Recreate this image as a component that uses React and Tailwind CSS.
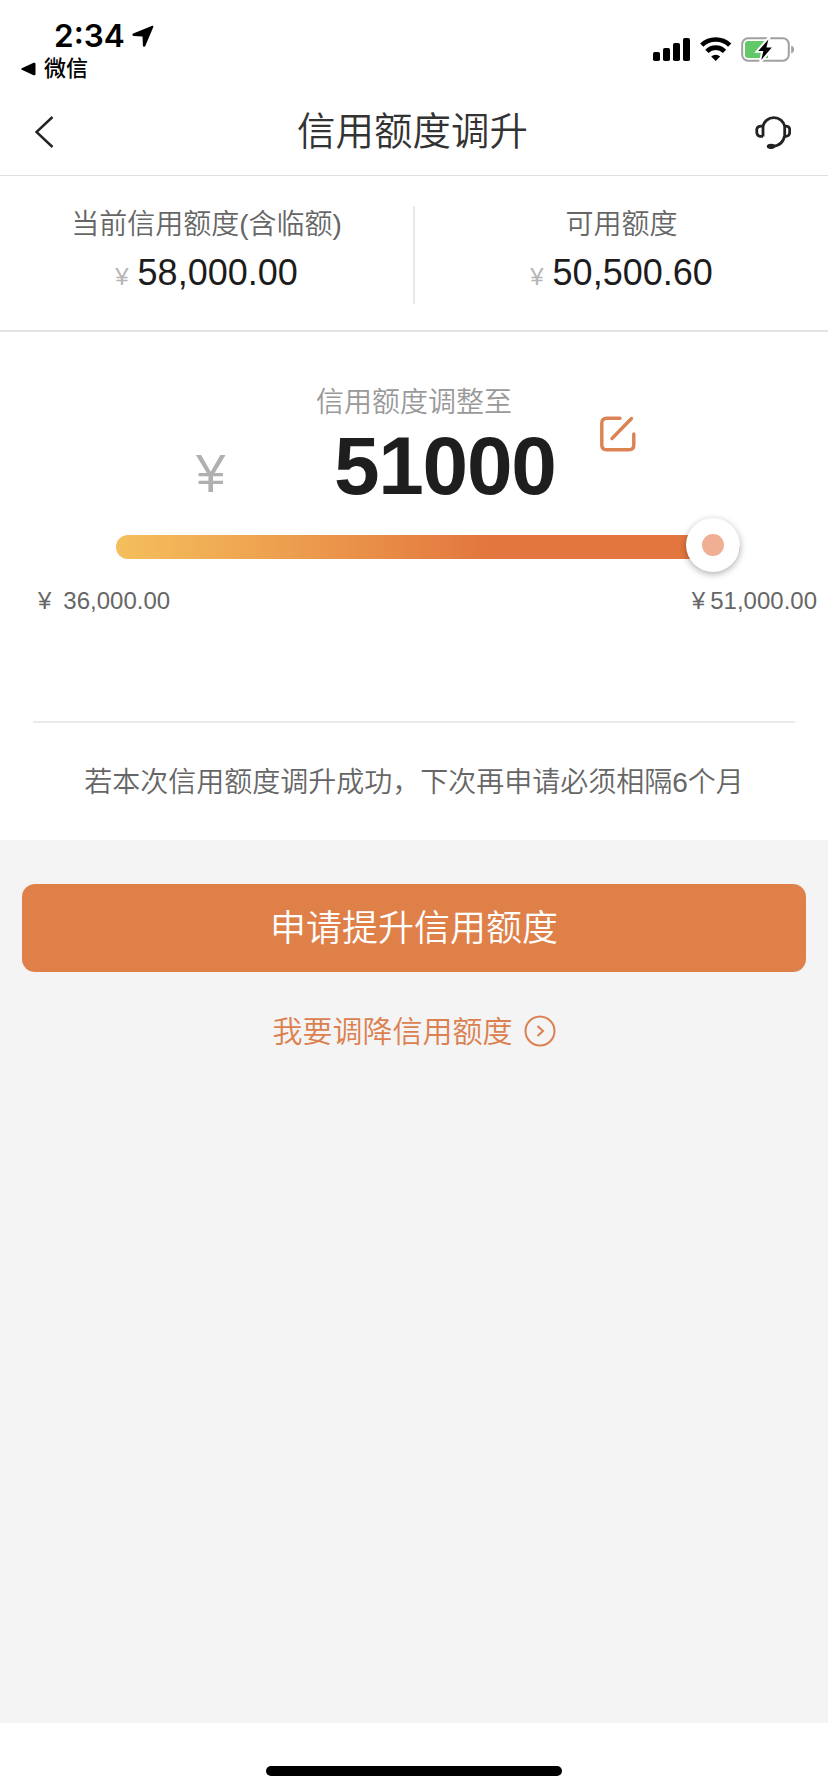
function LocationArrow() {
  return (
    <svg className="ml-[7px] h-[22px] w-[22px]" viewBox="0 0 22 22" fill="#000">
      <path d="M20.300.7 1.200 8.600c-1.300.6-.9 2.300.4 2.400l8.900.4.4 9.100c.1 1.400 1.900 1.700 2.400.500L21.300 1.900c.3-.8-.3-1.500-1-1.200Z" />
    </svg>
  );
}

function StatusBar() {
  return (
    <div className="flex h-[88px] justify-between">
      <div className="pl-[21px] pt-[20px]">
        <div className="flex h-8 items-center pl-[33px]">
          <span className="font-['Inter'] text-[31.500px] font-semibold leading-8 text-black">2:34</span>
          <LocationArrow />
        </div>
        <div className="flex h-[33px] items-center gap-[8px]">
          <svg className="h-[14px] w-[15px]" viewBox="0 0 15 14">
            <path d="M.8 6.200 12.600.8Q14.500.200 14.500 2v10q0 1.800-1.900 1.200L.8 7.800q-1.100-.8 0-1.600Z" />
          </svg>
          <span className="mt-[1px] text-[22px] font-medium leading-[34px] text-black">微信</span>
        </div>
      </div>
      <div className="flex items-start pr-[33px] pt-[37px]">
        <svg className="h-[25px] w-[142px]" viewBox="0 0 142 25">
          <rect x="0" y="15" width="7" height="9" rx="1.800" />
          <rect x="10" y="11" width="7" height="13" rx="1.800" />
          <rect x="20" y="6" width="7" height="18" rx="1.800" />
          <rect x="30" y="1" width="7" height="23" rx="1.800" />
          <g fill="none" stroke="#000" strokeWidth="4.600">
            <path d="M48.700 8.200a20 20 0 0 1 28 0" />
            <path d="M53.900 14.300a12.400 12.400 0 0 1 17.600 0" />
          </g>
          <path d="M62.700 24l-4.500-4.500a6.600 6.600 0 0 1 9 0Z" />
          <rect x="89.200" y="1.200" width="46.600" height="22.600" rx="6" fill="none" stroke="#a0a0a0" strokeWidth="2" />
          <path d="M95 4h20v17H95q-3 0-3-3V7q0-3 3-3Z" fill="#62c766" />
          <path d="M138.200 8.500c3.800 1.300 3.800 6.700 0 8Z" fill="#a0a0a0" />
          <path d="M115 2.800 105.600 13.800h4.600L108.600 22.500l9.800-11.500h-4.600Z" fill="#000" stroke="#fff" strokeWidth="4" />
          <path d="M115.400 2.500 105.200 14h5.200l-2.200 9 10.600-12.400h-5.400Z" fill="#000" />
        </svg>
      </div>
    </div>
  );
}

function Header() {
  return (
    <header className="flex h-[88px] items-center justify-between border-b border-[#e0e0e0] pl-[34px] pr-[37px]">
      <svg className="h-8 w-[37px]" viewBox="0 0 37 32" fill="none" stroke="#222" strokeWidth="2.400">
        <path d="M18.500 1 2.500 16l16 15" />
      </svg>
      <h1 className="text-[38.500px] font-[350] leading-[56px] text-[#333]">信用额度调升</h1>
      <svg className="h-[36px] w-[37px]" viewBox="0 0 37 36" fill="none" stroke="#222" strokeWidth="2.800">
        <path d="M9 22.500V12.500A11 10.700 0 0 1 30.700 12.500v9C29.500 28 25 32 18 32.300" />
        <path d="M9 12.200H7Q3.500 12.200 2.800 15v4q.7 3.300 3.700 3.300H9M30.700 12.200h1.300q3 0 3.700 2.800v4q-.7 3.300-3.700 3.300h-1.300" />
        <ellipse cx="17" cy="32.300" rx="3.600" ry="2" fill="#222" strokeWidth="1.200" />
      </svg>
    </header>
  );
}

function Balance({ label, amount }) {
  return (
    <div className="flex flex-1 flex-col items-center pt-[28px]">
      <div className="text-[28px] font-[350] leading-[42px] text-[#666]">{label}</div>
      <div className="mt-[6px] flex items-baseline gap-[9px] leading-[42px]">
        <span className="text-[24px] text-[#b5b5b5]">¥</span>
        <span className="text-[36px] text-[#1c1c1c]">{amount}</span>
      </div>
    </div>
  );
}

function Adjuster() {
  return (
    <section className="flex h-[508px] flex-col">
      <div className="pt-[50px] text-center text-[28px] font-[350] leading-[42px] text-[#999]">信用额度调整至</div>
      <div className="flex h-[98px] pl-[196px]">
        <span className="w-[138px] pt-[20px] text-[53px] leading-[60px] text-[#b0b0b0]">¥</span>
        <span className="-mt-[3px] text-[82px] font-bold leading-[90px] tracking-[-1.300px] text-[#1e1e1e]">51000</span>
        <svg className="ml-[43px] mt-[-9px] h-[38px] w-[38px]" viewBox="0 0 38 38" fill="none" stroke="#dc8354" strokeWidth="3.400" strokeLinecap="round">
          <path d="M21 3.200H8Q2.800 3.200 2.800 8v22q0 4.800 5 4.800h22q5 0 5-4.800V19" />
          <path d="M13 23.500 32.500 3.500" />
        </svg>
      </div>
      <div className="ml-[116px] mt-[13px] flex h-6 w-[624px] items-center justify-end rounded-full bg-linear-to-r from-[#f4bf5c] from-0% via-[#e2763e] via-60% to-[#e2763e]">
        <div className="-mt-[5px] flex size-[54px] shrink-0 items-center justify-center rounded-full bg-white shadow-[0_2px_7px_rgba(0,0,0,0.32)]">
          <div className="size-[22px] rounded-full bg-[#f0ae93]" />
        </div>
      </div>
      <div className="mt-[27px] flex justify-between pl-[38px] pr-[11px] text-[24px] leading-[30px] text-[#666]">
        <span className="flex gap-[12px]"><span>¥</span>36,000.00</span>
        <span className="flex gap-[5px]"><span>¥</span>51,000.00</span>
      </div>
      <div className="mx-[33px] mt-[105px] h-[2px] shrink-0 bg-[#ebebeb]" />
      <p className="mt-[39px] text-center text-[28px] font-[350] leading-[42px] text-[#666]">
        若本次信用额度调升成功，下次再申请必须相隔6个月
      </p>
    </section>
  );
}

export default function App() {
  return (
    <div className="flex h-[1792px] w-[828px] flex-col bg-white font-['Liberation_Sans','Noto_Sans_CJK_SC',sans-serif]">
      <StatusBar />
      <Header />
      <section className="flex h-[156px] border-b-2 border-[#e3e3e3]">
        <Balance label="当前信用额度(含临额)" amount="58,000.00" />
        <div className="mt-[30px] h-[98px] w-[2px] bg-[#e8e8e8]" />
        <Balance label="可用额度" amount="50,500.60" />
      </section>
      <Adjuster />
      <main className="flex h-[883px] flex-col items-center bg-[#f4f4f4] px-[22px] pt-[44px]">
        <button className="h-[88px] w-full rounded-[13px] bg-[#e08049] pt-[2px] text-[36px] font-[350] text-white">申请提升信用额度</button>
        <a className="mt-[37px] flex items-center gap-[11px] text-[30px] font-[350] leading-[42px] text-[#dc8050]">
          <span className="pt-[2px]">我要调降信用额度</span>
          <svg className="size-8" viewBox="0 0 32 32" fill="none" stroke="currentColor" strokeWidth="2">
            <circle cx="16" cy="16" r="14.500" />
            <path d="m13.500 11 5.500 5-5.500 5" />
          </svg>
        </a>
      </main>
      <footer className="flex justify-center pt-[43px]">
        <div className="h-[10px] w-[296px] rounded-full bg-black" />
      </footer>
    </div>
  );
}
